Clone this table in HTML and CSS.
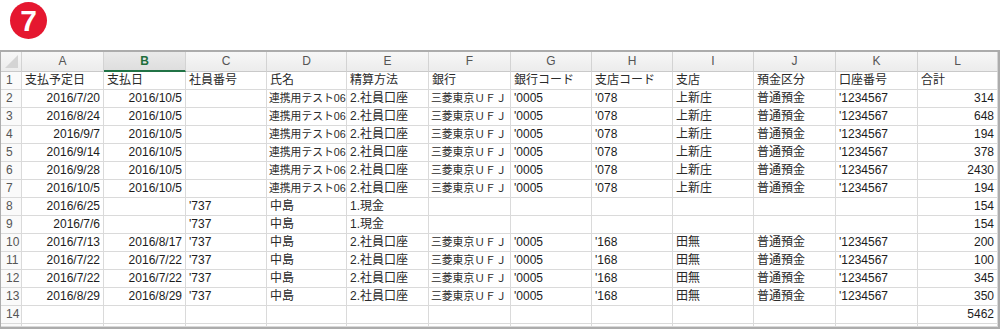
FILE: index.html
```html
<!DOCTYPE html>
<html lang="ja">
<head>
<meta charset="utf-8">
<title>Sheet</title>
<link rel="stylesheet" href="styles.css">
</head>
<body>
<div class="top"><span class="badge">7</span></div>
<div class="sheet">
  <div class="row head">
    <div class="corner"></div><div class="ch">A</div><div class="ch sel">B</div><div class="ch">C</div><div class="ch">D</div><div class="ch">E</div><div class="ch">F</div><div class="ch">G</div><div class="ch">H</div><div class="ch">I</div><div class="ch">J</div><div class="ch">K</div><div class="ch">L</div>
  </div>
  <div class="row">
    <div class="rh">1</div><div class="c j">支払予定日</div><div class="c j">支払日</div><div class="c j">社員番号</div><div class="c j">氏名</div><div class="c j">精算方法</div><div class="c j">銀行</div><div class="c j">銀行コード</div><div class="c j">支店コード</div><div class="c j">支店</div><div class="c j">預金区分</div><div class="c j">口座番号</div><div class="c j">合計</div>
  </div>
  <div class="row">
    <div class="rh">2</div><div class="c r">2016/7/20</div><div class="c r">2016/10/5</div><div class="c"></div><div class="c j s">連携用テスト06</div><div class="c j">2.社員口座</div><div class="c j s">三菱東京ＵＦＪ</div><div class="c">'0005</div><div class="c">'078</div><div class="c j">上新庄</div><div class="c j">普通預金</div><div class="c">'1234567</div><div class="c r">314</div>
  </div>
  <div class="row">
    <div class="rh">3</div><div class="c r">2016/8/24</div><div class="c r">2016/10/5</div><div class="c"></div><div class="c j s">連携用テスト06</div><div class="c j">2.社員口座</div><div class="c j s">三菱東京ＵＦＪ</div><div class="c">'0005</div><div class="c">'078</div><div class="c j">上新庄</div><div class="c j">普通預金</div><div class="c">'1234567</div><div class="c r">648</div>
  </div>
  <div class="row">
    <div class="rh">4</div><div class="c r">2016/9/7</div><div class="c r">2016/10/5</div><div class="c"></div><div class="c j s">連携用テスト06</div><div class="c j">2.社員口座</div><div class="c j s">三菱東京ＵＦＪ</div><div class="c">'0005</div><div class="c">'078</div><div class="c j">上新庄</div><div class="c j">普通預金</div><div class="c">'1234567</div><div class="c r">194</div>
  </div>
  <div class="row">
    <div class="rh">5</div><div class="c r">2016/9/14</div><div class="c r">2016/10/5</div><div class="c"></div><div class="c j s">連携用テスト06</div><div class="c j">2.社員口座</div><div class="c j s">三菱東京ＵＦＪ</div><div class="c">'0005</div><div class="c">'078</div><div class="c j">上新庄</div><div class="c j">普通預金</div><div class="c">'1234567</div><div class="c r">378</div>
  </div>
  <div class="row">
    <div class="rh">6</div><div class="c r">2016/9/28</div><div class="c r">2016/10/5</div><div class="c"></div><div class="c j s">連携用テスト06</div><div class="c j">2.社員口座</div><div class="c j s">三菱東京ＵＦＪ</div><div class="c">'0005</div><div class="c">'078</div><div class="c j">上新庄</div><div class="c j">普通預金</div><div class="c">'1234567</div><div class="c r">2430</div>
  </div>
  <div class="row">
    <div class="rh">7</div><div class="c r">2016/10/5</div><div class="c r">2016/10/5</div><div class="c"></div><div class="c j s">連携用テスト06</div><div class="c j">2.社員口座</div><div class="c j s">三菱東京ＵＦＪ</div><div class="c">'0005</div><div class="c">'078</div><div class="c j">上新庄</div><div class="c j">普通預金</div><div class="c">'1234567</div><div class="c r">194</div>
  </div>
  <div class="row">
    <div class="rh">8</div><div class="c r">2016/6/25</div><div class="c r"></div><div class="c">'737</div><div class="c j">中島</div><div class="c j">1.現金</div><div class="c"></div><div class="c"></div><div class="c"></div><div class="c"></div><div class="c"></div><div class="c"></div><div class="c r">154</div>
  </div>
  <div class="row">
    <div class="rh">9</div><div class="c r">2016/7/6</div><div class="c r"></div><div class="c">'737</div><div class="c j">中島</div><div class="c j">1.現金</div><div class="c"></div><div class="c"></div><div class="c"></div><div class="c"></div><div class="c"></div><div class="c"></div><div class="c r">154</div>
  </div>
  <div class="row">
    <div class="rh">10</div><div class="c r">2016/7/13</div><div class="c r">2016/8/17</div><div class="c">'737</div><div class="c j">中島</div><div class="c j">2.社員口座</div><div class="c j s">三菱東京ＵＦＪ</div><div class="c">'0005</div><div class="c">'168</div><div class="c j">田無</div><div class="c j">普通預金</div><div class="c">'1234567</div><div class="c r">200</div>
  </div>
  <div class="row">
    <div class="rh">11</div><div class="c r">2016/7/22</div><div class="c r">2016/7/22</div><div class="c">'737</div><div class="c j">中島</div><div class="c j">2.社員口座</div><div class="c j s">三菱東京ＵＦＪ</div><div class="c">'0005</div><div class="c">'168</div><div class="c j">田無</div><div class="c j">普通預金</div><div class="c">'1234567</div><div class="c r">100</div>
  </div>
  <div class="row">
    <div class="rh">12</div><div class="c r">2016/7/22</div><div class="c r">2016/7/22</div><div class="c">'737</div><div class="c j">中島</div><div class="c j">2.社員口座</div><div class="c j s">三菱東京ＵＦＪ</div><div class="c">'0005</div><div class="c">'168</div><div class="c j">田無</div><div class="c j">普通預金</div><div class="c">'1234567</div><div class="c r">345</div>
  </div>
  <div class="row">
    <div class="rh">13</div><div class="c r">2016/8/29</div><div class="c r">2016/8/29</div><div class="c">'737</div><div class="c j">中島</div><div class="c j">2.社員口座</div><div class="c j s">三菱東京ＵＦＪ</div><div class="c">'0005</div><div class="c">'168</div><div class="c j">田無</div><div class="c j">普通預金</div><div class="c">'1234567</div><div class="c r">350</div>
  </div>
  <div class="row">
    <div class="rh">14</div><div class="c"></div><div class="c"></div><div class="c"></div><div class="c"></div><div class="c"></div><div class="c"></div><div class="c"></div><div class="c"></div><div class="c"></div><div class="c"></div><div class="c"></div><div class="c r">5462</div>
  </div>
  <div class="row tail">
    <div class="rh"></div><div class="c"></div><div class="c"></div><div class="c"></div><div class="c"></div><div class="c"></div><div class="c"></div><div class="c"></div><div class="c"></div><div class="c"></div><div class="c"></div><div class="c"></div><div class="c"></div>
  </div>
</div>
</body>
</html>
```
FILE: styles.css
```css
html, body {
  margin: 0;
  padding: 0;
  background: #ffffff;
}
body {
  width: 1000px;
  height: 330px;
  overflow: hidden;
  font-family: "Liberation Sans", "Noto Sans CJK JP", sans-serif;
  color: #1c1c1c;
}
.top {
  height: 50px;
  padding: 2px 0 0 10px;
  box-sizing: border-box;
}
.badge {
  display: flex;
  align-items: center;
  justify-content: center;
  width: 37px;
  height: 37px;
  border-radius: 50%;
  background: #e5172f;
  color: #ffffff;
  font-family: "Liberation Sans", sans-serif;
  font-weight: bold;
  font-size: 30px;
  line-height: 1;
}
.sheet {
  width: 1000px;
  box-sizing: border-box;
  border: 2px solid #acacac;
  border-left-width: 1px;
  overflow: hidden;
}
.row {
  display: grid;
  grid-template-columns: 21px 82px 82px 81px 80px 82px 82px 81px 81px 81px 82px 82px 80px;
  height: 18px;
}
.row > div {
  box-sizing: border-box;
  border-right: 1px solid #dadada;
  border-bottom: 1px solid #dadada;
  overflow: hidden;
  white-space: nowrap;
}
.head {
  height: 20px;
}
.head > div {
  background: linear-gradient(#f7f7f7, #ececec);
  border-bottom: 1px solid #c9c9c9;
  border-right-color: #d3d3d3;
}
.corner {
  position: relative;
}
.corner::after {
  content: "";
  position: absolute;
  right: 3px;
  bottom: 3px;
  width: 0;
  height: 0;
  border-left: 13px solid transparent;
  border-bottom: 13px solid #d4d4d4;
}
.ch {
  text-align: center;
  font-size: 12px;
  line-height: 19px;
  color: #555555;
}
.head > .ch.sel {
  background: linear-gradient(#eaeaea, #dedede);
  border-bottom: 2px solid #217346;
  color: #1f6e3b;
  font-weight: bold;
  line-height: 18px;
}
.rh {
  background: #fafafa;
  font-size: 12px;
  line-height: 17px;
  color: #555555;
  padding-left: 5px;
}
.c {
  font-size: 12px;
  line-height: 17px;
  padding: 0 3px;
}
.c.j {
  font-size: 12px;
  color: #2a2a2a;
}
.c.s {
  font-size: 10.8px;
  padding-left: 2px;
}
.c.r {
  text-align: right;
}
.tail {
  height: 3px;
}
```
